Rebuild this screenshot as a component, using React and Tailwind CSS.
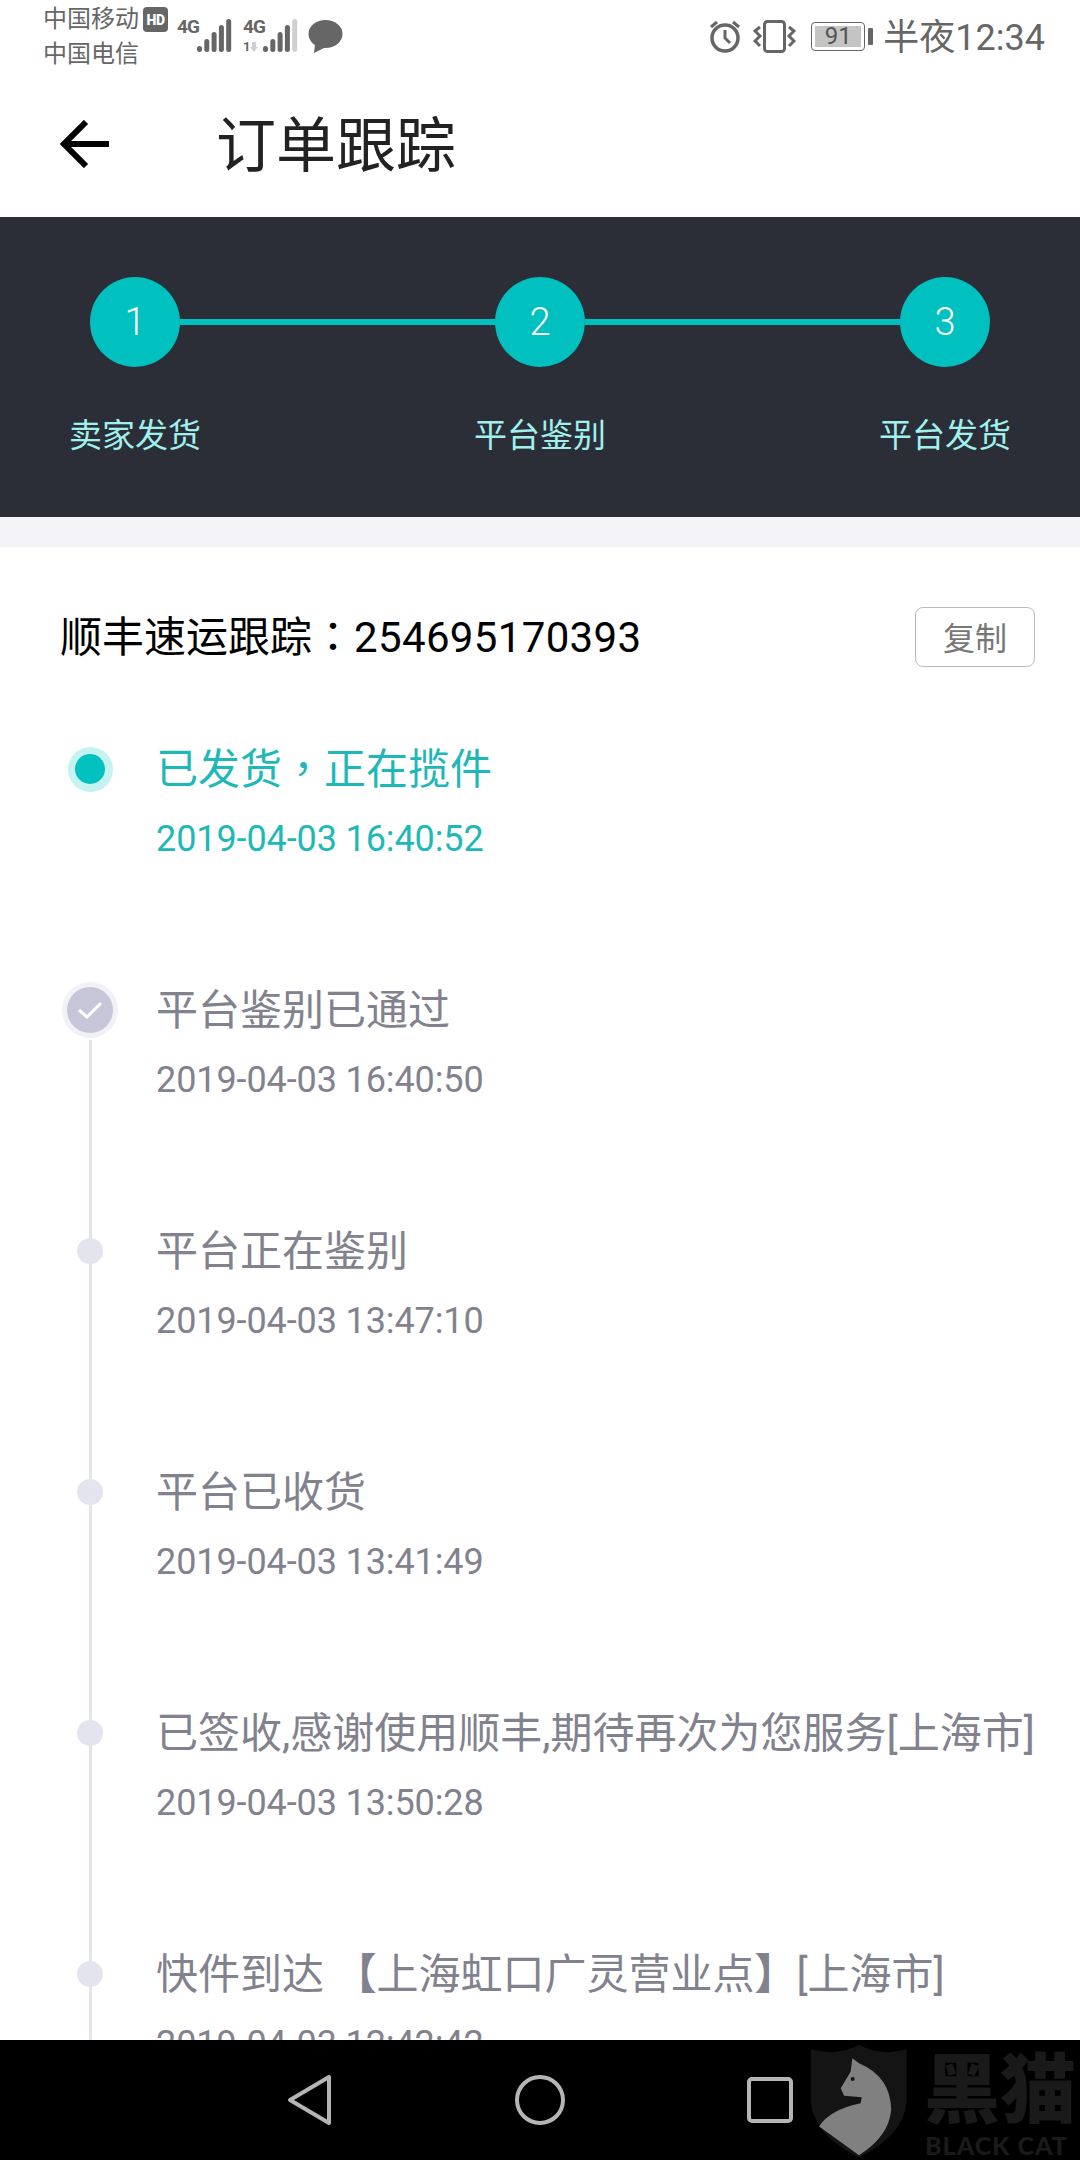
const steps = ["卖家发货", "平台鉴别", "平台发货"];

const cjkTc = "font-['Noto_Sans_CJK_TC',sans-serif] leading-[0]";

const events = [
  {
    title: (
      <>
        已发货<span className={cjkTc}>，</span>正在揽件
      </>
    ),
    time: "2019-04-03 16:40:52",
    kind: "current",
  },
  { title: "平台鉴别已通过", time: "2019-04-03 16:40:50", kind: "done" },
  { title: "平台正在鉴别", time: "2019-04-03 13:47:10" },
  { title: "平台已收货", time: "2019-04-03 13:41:49" },
  { title: "已签收,感谢使用顺丰,期待再次为您服务[上海市]", time: "2019-04-03 13:50:28" },
  {
    title: (
      <>
        快件到达 <span className="font-black">【</span>上海虹口广灵营业点<span className="font-black">】</span>[上海市]
      </>
    ),
    time: "2019-04-03 12:42:42",
  },
];

function Signal({ dim = false }) {
  const heights = [6, 13, 20, 27, 33];
  return (
    <svg width="36" height="33" viewBox="0 0 36 33">
      {heights.map((h, i) => (
        <rect
          key={i}
          x={1 + i * 7.3}
          y={33 - h}
          width="5"
          height={h}
          rx="2.5"
          fill={dim && i === 4 ? "#d0d0d0" : "#666"}
        />
      ))}
    </svg>
  );
}

function StatusBar() {
  return (
    <div className="flex h-[75px] items-start justify-between pl-[43px] pr-[35px] text-[#666]">
      <div className="flex items-start">
        <div className="pt-[2px] text-[24px] leading-[35px]">
          <div>中国移动</div>
          <div>中国电信</div>
        </div>
        <span className="ml-[4px] mt-[7px] flex h-[25px] w-[25px] items-center justify-center rounded-[4px] bg-[#666] text-[14px] font-black leading-none tracking-[-0.5px] text-white">
          HD
        </span>
        <div className="ml-[9px] mt-[19px] flex items-start">
          <span className="w-[19px] text-[19px] font-bold leading-[15px] tracking-[-1px]">4G</span>
          <Signal />
        </div>
        <div className="ml-[11px] mt-[19px] flex items-start">
          <div className="flex w-[19px] flex-col">
            <span className="text-[19px] font-bold leading-[15px] tracking-[-1px]">4G</span>
            <div className="mt-[8px] flex items-center">
              <span className="text-[13px] font-bold leading-[10px]">1</span>
              <svg width="8" height="10" viewBox="0 0 8 10">
                <path d="M2 0v5H0l4 5 4-5H6V0z" fill="#d0d0d0" />
              </svg>
            </div>
          </div>
          <Signal dim />
        </div>
        <svg className="ml-[10px] mt-[20px]" width="35" height="33" viewBox="0 0 35 33">
          <ellipse cx="17.5" cy="14" rx="17" ry="14" fill="#666" />
          <path d="M7 24 L6 33 L18 27 Z" fill="#666" />
        </svg>
      </div>
      <div className="flex items-start">
        <svg className="mt-[20px]" width="32" height="33" viewBox="0 0 32 33" fill="none" stroke="#666">
          <circle cx="16" cy="18" r="13" strokeWidth="3.5" />
          <path d="M16 10v8l5 5" strokeWidth="3" />
          <path d="M2 7l6-5M30 7l-6-5" strokeWidth="3" />
        </svg>
        <svg className="ml-[12px] mt-[20px]" width="43" height="33" viewBox="0 0 43 33" fill="none" stroke="#666">
          <rect x="11.5" y="1.5" width="20" height="30" rx="3" strokeWidth="3" />
          <path d="M7 7L2 11l5 5-5 5 5 5M36 7l5 4-5 5 5 5-5 5" strokeWidth="3" />
        </svg>
        <div className="ml-[15px] mt-[22px] flex items-center">
          <div className="flex h-[29px] w-[54px] items-stretch rounded-[4px] border border-[#666] p-[3px]">
            <div className="flex-1 bg-[#c4c4c4] text-center text-[24px] leading-[21px] text-[#555]">91</div>
          </div>
          <span className="ml-[3px] h-[17px] w-[5px] rounded-[1px] bg-[#666]" />
        </div>
        <span className="ml-[10px] mt-[18px] text-[36px] leading-[40px]">半夜12:34</span>
      </div>
    </div>
  );
}

function Header() {
  return (
    <div className="flex h-[142px] items-center pl-[60px]">
      <svg className="-mt-[5px]" width="50" height="48" viewBox="0 0 50 48" fill="none" stroke="#000" strokeWidth="6">
        <path d="M26 2 L4 24 L26 46" />
        <path d="M4 24 H49" />
      </svg>
      <h1 className="ml-[106px] mt-[2px] text-[60px] font-normal leading-none text-[#222]">订单跟踪</h1>
    </div>
  );
}

function Stepper() {
  return (
    <div className="h-[300px] bg-[#2b2e37] pt-[60px]">
      <div className="flex items-center px-[90px]">
        {[1, 2, 3].map((n) => (
          <div key={n} className={n === 1 ? "flex items-center" : "flex flex-1 items-center"}>
            {n > 1 && <span className="h-[6px] flex-1 bg-[#00c0c0]" />}
            <span className="flex h-[90px] w-[90px] items-center justify-center rounded-full bg-[#00c0c0] text-[38px] font-light text-white">
              {n}
            </span>
          </div>
        ))}
      </div>
      <div className="mt-[49px] flex justify-between px-[69px] text-[33px] leading-[40px] text-[#a0f0ee]">
        {steps.map((s) => (
          <span key={s}>{s}</span>
        ))}
      </div>
    </div>
  );
}

function Marker({ kind }) {
  if (kind === "current") {
    return (
      <div className="flex h-[56px] items-center justify-center">
        <span className="flex h-[45px] w-[45px] items-center justify-center rounded-full bg-[#c5f3f1]">
          <span className="h-[30px] w-[30px] rounded-full bg-[#00c0c0]" />
        </span>
      </div>
    );
  }
  if (kind === "done") {
    return (
      <span className="flex h-[56px] w-[56px] shrink-0 items-center justify-center rounded-full bg-[#f2f2f6]">
        <span className="flex h-[46px] w-[46px] items-center justify-center rounded-full bg-[#c6c6d8]">
          <svg width="26" height="20" viewBox="0 0 26 20" fill="none" stroke="#fff" strokeWidth="3">
            <path d="M2 10l8 7L24 3" />
          </svg>
        </span>
      </span>
    );
  }
  return (
    <>
      <span className="h-[15px] w-[3px] shrink-0 bg-[#e4e4ee]" />
      <span className="h-[26px] w-[26px] shrink-0 rounded-full bg-[#e4e4ee]" />
    </>
  );
}

function TimelineRow({ event, first }) {
  const color = event.kind === "current" ? "text-[#1fb8b8]" : "text-[#82828e]";
  return (
    <div className="flex h-[241px] shrink-0">
      <div className="flex w-[56px] shrink-0 flex-col items-center">
        <Marker kind={event.kind} />
        {!first && <span className={`w-[3px] flex-1 bg-[#e4e4ee] ${event.kind === "done" ? "mt-[2px]" : ""}`} />}
      </div>
      <div className="ml-[38px]">
        <div className={`whitespace-nowrap text-[42px] leading-[58px] ${color}`}>{event.title}</div>
        <div className={`mt-[20px] text-[36px] leading-[40px] tracking-[-0.1px] ${color}`}>{event.time}</div>
      </div>
    </div>
  );
}

function NavBar() {
  return (
    <div className="relative flex h-[120px] shrink-0 items-center justify-center gap-[170px] bg-black">
      <svg width="60" height="60" viewBox="0 0 60 60" fill="none" stroke="#b5b5b5" strokeWidth="4" strokeLinejoin="round">
        <path d="M49 7 V53 L10 30 Z" />
      </svg>
      <svg width="60" height="60" viewBox="0 0 60 60" fill="none" stroke="#b5b5b5" strokeWidth="4">
        <circle cx="30" cy="30" r="23" />
      </svg>
      <svg width="60" height="60" viewBox="0 0 60 60" fill="none" stroke="#b5b5b5" strokeWidth="4">
        <rect x="9" y="9" width="42" height="42" rx="3" />
      </svg>

      {/* black cat watermark */}
      <svg className="absolute left-[810px] top-[5px]" width="98" height="113" viewBox="155 165 290 340">
        <path d="M155 178 Q230 200 300 165 Q370 200 443 178 L443 340 Q430 440 300 503 Q170 440 155 340 Z" fill="#141414" />
        <path d="M280 205 L300 220 Q395 260 397 360 Q390 440 300 497 L180 410 Q210 360 305 340 L308 322 L255 318 L245 295 L275 245 Z" fill="#808080" />
        <circle cx="281" cy="267" r="6" fill="#141414" />
      </svg>
      <span className="absolute left-[924px] top-[16px] whitespace-nowrap text-[76px] font-black leading-[70px] text-[#1a1a1a]">
        黑猫
      </span>
      <span className="absolute left-[925px] top-[92px] whitespace-nowrap font-['Lato',sans-serif] text-[25px] font-black leading-[26px] tracking-[1px] text-[#1a1a1a]">
        BLACK CAT
      </span>
    </div>
  );
}

export default function App() {
  return (
    <div className="flex h-[2160px] w-[1080px] flex-col overflow-hidden bg-white font-['Roboto','Noto_Sans_CJK_SC',sans-serif]">
      <StatusBar />
      <Header />
      <Stepper />
      <div className="h-[30px] shrink-0 bg-[#f4f4f8]" />
      <div className="min-h-0 flex-1 overflow-hidden pt-[60px]">
        <div className="flex h-[60px] items-center justify-between pl-[60px] pr-[45px]">
          <span className="text-[42px] text-black">
            顺丰速运跟踪<span className={cjkTc}>：</span>
            <span className="tracking-[0.35px]">254695170393</span>
          </span>
          <button className="h-[60px] w-[120px] rounded-[8px] border border-[#bbbbbb] pt-[3px] text-[32px] text-[#777]">复制</button>
        </div>
        <div className="mt-[74px] flex flex-col pl-[62px]">
          {events.map((event, i) => (
            <TimelineRow key={event.time} event={event} first={i === 0} />
          ))}
        </div>
      </div>
      <NavBar />
    </div>
  );
}
